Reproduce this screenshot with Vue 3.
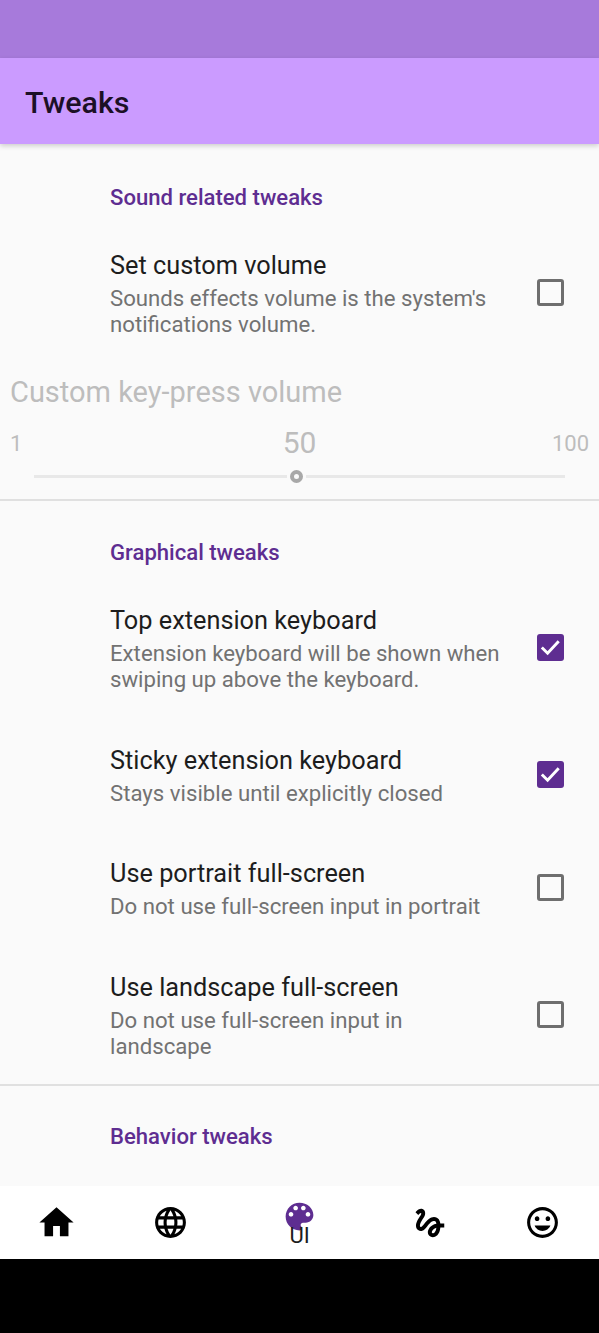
<script setup>
const graphical = [
  { title: 'Top extension keyboard', summary: 'Extension keyboard will be shown when swiping up above the keyboard.', checked: true },
  { title: 'Sticky extension keyboard', summary: 'Stays visible until explicitly closed', checked: true },
  { title: 'Use portrait full-screen', summary: 'Do not use full-screen input in portrait', checked: false },
  { title: 'Use landscape full-screen', summary: 'Do not use full-screen input in landscape', checked: false }
]
</script>

<template>
  <div class="screen">
    <div class="statusbar"></div>
    <header class="toolbar"><h1>Tweaks</h1></header>

    <main class="content">
      <h2 class="category first">Sound related tweaks</h2>
      <div class="pref">
        <div class="pref-text">
          <div class="pref-title">Set custom volume</div>
          <div class="pref-summary">Sounds effects volume is the system's notifications volume.</div>
        </div>
        <div class="check"></div>
      </div>

      <div class="seek">
        <div class="seek-title">Custom key-press volume</div>
        <div class="seek-values">
          <span class="seek-limit">1</span>
          <span class="seek-current">50</span>
          <span class="seek-limit seek-max">100</span>
        </div>
        <div class="seek-track">
          <div class="seek-line before"></div>
          <div class="seek-thumb"></div>
          <div class="seek-line after"></div>
        </div>
      </div>
      <div class="divider"></div>

      <h2 class="category">Graphical tweaks</h2>
      <div v-for="item in graphical" :key="item.title" class="pref spaced">
        <div class="pref-text">
          <div class="pref-title">{{ item.title }}</div>
          <div class="pref-summary">{{ item.summary }}</div>
        </div>
        <div class="check" :class="{ on: item.checked }">
          <svg v-if="item.checked" viewBox="0 0 28 28" width="27" height="27">
            <path d="M5 14l6 6L22.500 7.500" fill="none" stroke="#fff" stroke-width="3" />
          </svg>
        </div>
      </div>
      <div class="divider last"></div>

      <h2 class="category">Behavior tweaks</h2>
    </main>

    <nav class="tabs">
      <div class="tab">
        <svg viewBox="0 0 24 24" width="41" height="41"><path d="M10 20v-6h4v6h5v-8h3L12 3 2 12h3v8z" fill="#000" /></svg>
      </div>
      <div class="tab">
        <svg viewBox="0 0 24 24" width="37" height="37"><path d="M11.99 2C6.47 2 2 6.48 2 12s4.47 10 9.99 10C17.52 22 22 17.52 22 12S17.52 2 11.99 2zm6.93 6h-2.95c-.32-1.25-.78-2.45-1.38-3.56 1.84.63 3.37 1.91 4.33 3.56zM12 4.04c.83 1.2 1.48 2.53 1.91 3.96h-3.82c.43-1.43 1.08-2.76 1.91-3.96zM4.26 14C4.1 13.36 4 12.69 4 12s.1-1.36.26-2h3.38c-.08.66-.14 1.32-.14 2s.06 1.34.14 2H4.26zm.82 2h2.95c.32 1.25.78 2.45 1.38 3.56-1.84-.63-3.37-1.9-4.33-3.56zm2.95-8H5.08c.96-1.66 2.49-2.93 4.33-3.56C8.81 5.55 8.35 6.75 8.03 8zM12 19.96c-.83-1.2-1.48-2.53-1.91-3.96h3.82c-.43 1.43-1.08 2.76-1.91 3.96zM14.34 14H9.66c-.09-.66-.16-1.32-.16-2s.07-1.35.16-2h4.68c.09.65.16 1.32.16 2s-.07 1.34-.16 2zm.25 5.56c.6-1.11 1.06-2.31 1.38-3.56h2.95c-.96 1.65-2.49 2.93-4.33 3.56zM16.36 14c.08-.66.14-1.32.14-2s-.06-1.34-.14-2h3.38c.16.64.26 1.31.26 2s-.1 1.36-.26 2h-3.38z" fill="#000" /></svg>
      </div>
      <div class="tab active">
        <svg viewBox="0 0 24 24" width="37" height="37"><path d="M12 3c-4.97 0-9 4.03-9 9s4.03 9 9 9c.83 0 1.5-.67 1.5-1.5 0-.39-.15-.74-.39-1.01-.23-.26-.38-.61-.38-.99 0-.83.67-1.5 1.5-1.5H16c2.76 0 5-2.24 5-5 0-4.42-4.03-8-9-8zm-5.5 9c-.83 0-1.5-.67-1.5-1.5S5.67 9 6.5 9 8 9.67 8 10.500 7.330 12 6.500 12zm3-4C8.670 8 8 7.330 8 6.500S8.670 5 9.500 5s1.500.670 1.500 1.500S10.330 8 9.500 8zm5 0c-.830 0-1.500-.670-1.500-1.500S13.670 5 14.500 5s1.500.670 1.500 1.500S15.330 8 14.500 8zm3 4c-.830 0-1.500-.670-1.500-1.500S16.670 9 17.500 9s1.500.670 1.500 1.500-.670 1.500-1.500 1.500z" fill="#5e2d91" /></svg>
        <span class="tab-label">UI</span>
      </div>
      <div class="tab">
        <svg viewBox="0 0 24 24" width="38" height="38"><path d="M4.590 6.890c.700-.710 1.400-1.350 1.710-1.220.500.200 0 1.030-.300 1.520-.250.420-2.860 3.890-2.860 6.310 0 1.280.480 2.340 1.340 2.980.750.560 1.740.730 2.640.460 1.070-.310 1.950-1.400 3.060-2.770 1.210-1.490 2.830-3.440 4.080-3.440 1.630 0 1.650 1.010 1.760 1.790-3.780.640-5.380 3.670-5.380 5.370 0 1.700 1.440 3.090 3.210 3.090 1.630 0 4.290-1.330 4.690-6.100H21v-2.500h-2.470c-.150-1.650-1.090-4.200-4.030-4.200-2.250 0-4.180 1.910-4.940 2.840-.580.730-2.060 2.480-2.290 2.720-.250.300-.680.840-1.110.840-.450 0-.720-.830-.360-1.920.350-1.090 1.400-2.860 1.850-3.520.780-1.140 1.300-1.920 1.300-3.280C8.950 3.690 7.310 3 6.440 3 5.120 3 3.970 4 3.720 4.250c-.360.360-.660.660-.880.930l1.750 1.710zm9.290 11.660c-.310 0-.740-.260-.740-.720 0-.600.730-2.200 2.870-2.760-.300 2.690-1.430 3.480-2.130 3.480z" fill="#000" /></svg>
      </div>
      <div class="tab">
        <svg viewBox="0 0 24 24" width="37" height="37"><path d="M11.990 2C6.470 2 2 6.480 2 12s4.470 10 9.990 10C17.520 22 22 17.520 22 12S17.520 2 11.990 2zM12 20c-4.420 0-8-3.580-8-8s3.580-8 8-8 8 3.580 8 8-3.580 8-8 8zm3.500-9c.830 0 1.500-.670 1.500-1.500S16.330 8 15.500 8 14 8.670 14 9.500s.670 1.500 1.500 1.500zm-7 0c.830 0 1.500-.670 1.500-1.500S9.330 8 8.500 8 7 8.670 7 9.500 7.670 11 8.500 11zm3.500 6.500c2.330 0 4.310-1.460 5.110-3.500H6.890c.800 2.040 2.780 3.500 5.110 3.500z" fill="#000" /></svg>
      </div>
    </nav>
    <div class="navbar"></div>
  </div>
</template>

<style>
body {
  margin: 0;
  background: #000;
}
</style>

<style scoped>
.screen {
  width: 599px;
  height: 1333px;
  display: flex;
  flex-direction: column;
  overflow: hidden;
  background: #fafafa;
  font-family: Roboto, "Liberation Sans", sans-serif;
}

.statusbar {
  height: 58px;
  flex: none;
  background: #a77adb;
}

.toolbar {
  height: 86px;
  flex: none;
  box-sizing: border-box;
  display: flex;
  align-items: center;
  padding: 3px 0 0 25px;
  background: #cb9bff;
  box-shadow: 0 2px 5px rgba(0, 0, 0, 0.18);
  position: relative;
}

.toolbar h1 {
  margin: 0;
  font-size: 30.4px;
  font-weight: 500;
  color: #1c1026;
}

.content {
  flex: 1;
  min-height: 0;
  overflow: hidden;
}

.category {
  margin: 0;
  padding: 37px 0 0 110px;
  height: 28px;
  line-height: 28px;
  font-size: 22.100px;
  font-weight: 500;
  color: #5e2d91;
}

.category.first {
  padding-top: 39px;
}

.divider.last + .category {
  padding-top: 36px;
}

.pref {
  display: flex;
  align-items: center;
  padding: 40px 35px 0 110px;
}

.pref.spaced {
  padding-bottom: 13.500px;
}

.pref-text {
  flex: 1;
  padding-right: 32px;
}

.pref-title {
  font-size: 25.300px;
  line-height: 30px;
  color: #1d1d1d;
}

.pref-summary {
  font-size: 22.200px;
  line-height: 26px;
  color: #727272;
  margin-top: 4px;
}

.check {
  width: 27px;
  height: 27px;
  flex: none;
  box-sizing: border-box;
  margin-bottom: 3px;
  border: 3px solid #6e6e6e;
  border-radius: 3px;
}

.check.on {
  border: 0;
  background: #5e2d91;
}

.check svg {
  display: block;
}

.seek {
  padding: 37px 10px 0;
  color: #bdbdbd;
}

.seek-title {
  font-size: 29px;
  line-height: 36px;
}

.seek-values {
  display: grid;
  grid-template-columns: 1fr auto 1fr;
  align-items: center;
  margin-top: 16px;
  font-size: 22px;
  line-height: 34px;
}

.seek-limit {
  padding-top: 2px;
  line-height: 30px;
}

.seek-current {
  font-size: 30px;
}

.seek-max {
  text-align: right;
}

.seek-track {
  display: flex;
  align-items: center;
  gap: 3px;
  padding: 0 24px;
  margin-top: 8px;
  height: 16px;
}

.seek-line {
  height: 3px;
  background: #e8e8e8;
}

.seek-line.before {
  flex: 253;
}

.seek-line.after {
  flex: 260;
}

.seek-thumb {
  width: 13px;
  height: 13px;
  box-sizing: border-box;
  border: 4px solid #a8a8a8;
  border-radius: 50%;
}

.divider {
  height: 2px;
  margin-top: 15px;
  background: #e0e0e0;
}

.divider.last {
  margin-top: 12px;
}

.tabs {
  height: 73px;
  flex: none;
  display: grid;
  grid-template-columns: 113px 114px 145px 115px 111px;
  background: #fff;
}

.tab {
  display: flex;
  flex-direction: column;
  align-items: center;
  justify-content: center;
}

.tab.active {
  justify-content: flex-start;
  padding-top: 12px;
}

.tab-label {
  margin-top: -10px;
  font-size: 22px;
  line-height: 22px;
  color: #1d1d1d;
}

.navbar {
  height: 74px;
  flex: none;
  background: #000;
}
</style>
